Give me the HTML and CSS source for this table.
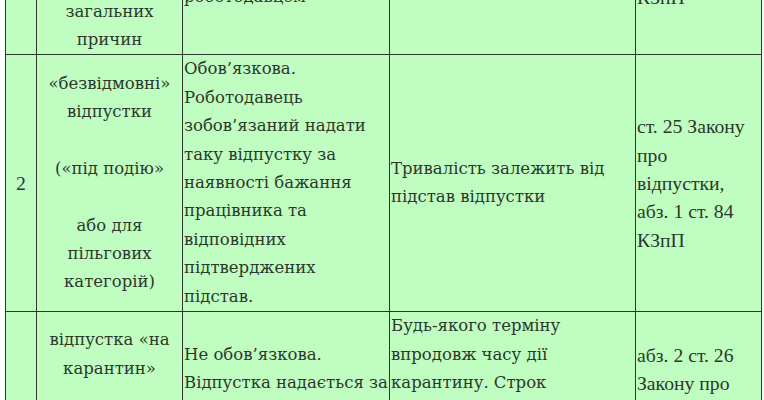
FILE: index.html
```html
<!DOCTYPE html>
<html lang="uk">
<head>
<meta charset="utf-8">
<title>Відпустки</title>
<link rel="stylesheet" href="styles.css">
</head>
<body>
<div class="page">
  <table class="leave-table">
    <colgroup>
      <col class="c-num">
      <col class="c-type">
      <col class="c-duty">
      <col class="c-term">
      <col class="c-law">
    </colgroup>
    <tbody>
      <tr>
        <td class="num">1</td>
        <td class="type">щорічні<br>відпустки<br><br>або з<br>загальних<br>причин</td>
        <td class="text">Обов’язкова.<br>Погоджується з<br>роботодавцем</td>
        <td class="text">24 календарні дні</td>
        <td class="law">ст. 6 Закону<br>про відпустки,<br>КЗпП</td>
      </tr>
      <tr>
        <td class="num">2</td>
        <td class="type">«безвідмовні»<br>відпустки<br><br>(«під подію»<br><br>або для<br>пільгових<br>категорій)</td>
        <td class="text">Обов’язкова.<br>Роботодавець<br>зобов’язаний надати<br>таку відпустку за<br>наявності бажання<br>працівника та<br>відповідних<br>підтверджених<br>підстав.</td>
        <td class="text">Тривалість залежить від<br>підстав відпустки</td>
        <td class="law">ст. 25 Закону<br>про<br>відпустки,<br>абз. 1 ст. 84<br>КЗпП</td>
      </tr>
      <tr>
        <td class="num">3</td>
        <td class="type">відпустка «на<br>карантин»<br><br>(без<br>збереження<br>зарплати)</td>
        <td class="text">Не обов’язкова.<br>Відпустка надається за<br>згодою працівника<br>і роботодавця<br>(за заявою)</td>
        <td class="text">Будь-якого терміну<br>впродовж часу дії<br>карантину. Строк<br>відпустки<br>узгоджується<br>працівником та<br>роботодавцем</td>
        <td class="law">абз. 2 ст. 26<br>Закону про<br>відпустки,<br>ст. 84<br>КЗпП</td>
      </tr>
    </tbody>
  </table>
</div>
</body>
</html>
```
FILE: styles.css
```css
html, body {
  margin: 0;
  padding: 0;
  background: #ffffff;
}

.page {
  padding-left: 5px;
  margin-top: -117px;
}

.leave-table {
  border-collapse: collapse;
  table-layout: fixed;
  width: 756px;
  background: #c0fdc0;
  color: #2c382c;
  font-family: "DejaVu Serif", serif;
  font-size: 16.5px;
  line-height: 28.4px;
}

.c-num { width: 31px; }
.c-type { width: 146px; }
.c-duty { width: 207px; }
.c-term { width: 246px; }
.c-law { width: 126px; }

.leave-table td {
  border: 1px solid #2c382c;
  padding: 0 1px;
  vertical-align: middle;
  white-space: nowrap;
  overflow: hidden;
}

.leave-table .num {
  text-align: center;
  font-family: "Liberation Serif", serif;
  font-size: 19.7px;
}

.leave-table .type {
  text-align: center;
}

.leave-table .text {
  text-align: left;
}

.leave-table .law {
  text-align: left;
  font-family: "Liberation Serif", serif;
  font-size: 19.7px;
}
```
